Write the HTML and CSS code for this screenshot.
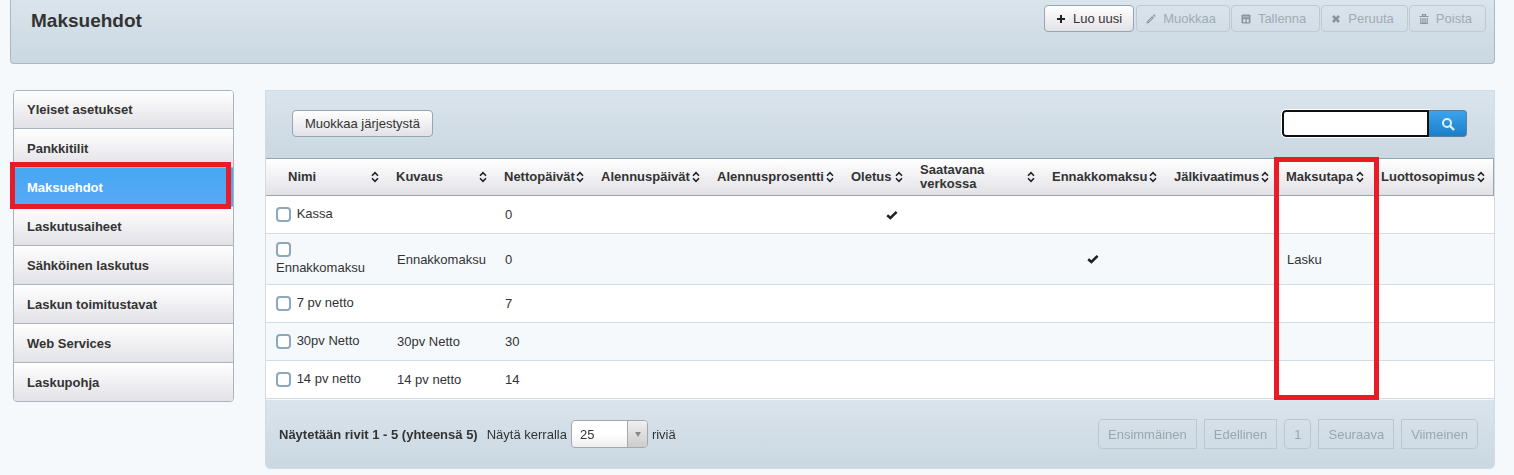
FILE: index.html
```html
<!DOCTYPE html>
<html lang="fi">
<head>
<meta charset="utf-8">
<title>Maksuehdot</title>
<link rel="stylesheet" href="styles.css">
</head>
<body>
<svg class="sprite" aria-hidden="true">
  <symbol id="sort" viewBox="0 0 8 12"><path d="M1 4.7 4 1.7 7 4.7M1 7.3l3 3 3-3" fill="none" stroke="currentColor" stroke-width="1.6"/></symbol>
  <symbol id="check" viewBox="0 0 12 10"><path d="M1.2 5.2 4.4 8 10.6 1.8" fill="none" stroke="currentColor" stroke-width="2.6"/></symbol>
</svg>
<header class="page-header">
  <h1 class="title">Maksuehdot</h1>
  <div class="actions">
    <button class="btn" type="button"><svg class="icon" viewBox="0 0 10 10"><path d="M5 1v8M1 5h8" stroke="currentColor" stroke-width="2"/></svg>Luo uusi</button>
    <button class="btn" type="button" disabled><svg class="icon" viewBox="0 0 10 10"><path d="M.5 9.5 1 7.2 6.2 2 8 3.8 2.8 9zM6.9 1.3 8 .3 9.7 2 8.7 3.1z" fill="currentColor"/><path d="M2.3 7.7 6.3 3.7" stroke="#d7e1e9" stroke-width=".7"/></svg>Muokkaa</button>
    <button class="btn" type="button" disabled><svg class="icon" viewBox="0 0 10 10"><path d="M1.5.5h7l1 1v7l-1 1h-7l-1-1v-7z" fill="currentColor"/><path d="M2 2.8h6M2.5 5.4h1.6v2.6h-1.6zM6 5.4h1.5v2.6h-1.5z" fill="#d7e1e9" stroke="#d7e1e9" stroke-width=".6"/></svg>Tallenna</button>
    <button class="btn" type="button" disabled><svg class="icon" viewBox="0 0 10 10"><path d="M2 2l6 6M8 2 2 8" stroke="currentColor" stroke-width="2.6"/></svg>Peruuta</button>
    <button class="btn" type="button" disabled><svg class="icon" viewBox="0 0 10 10"><path d="M.5 2.5h9M3.5 2V.7h3V2M1.8 4v5.4h6.4V4M4 4v5M6 4v5" fill="none" stroke="currentColor" stroke-width="1.2"/></svg>Poista</button>
  </div>
</header>
<div class="layout">
  <nav class="side">
    <a class="side-link" href="#">Yleiset asetukset</a>
    <a class="side-link" href="#">Pankkitilit</a>
    <a class="side-link active" href="#">Maksuehdot<span class="mark mark-link"></span></a>
    <a class="side-link" href="#">Laskutusaiheet</a>
    <a class="side-link" href="#">Sähköinen laskutus</a>
    <a class="side-link" href="#">Laskun toimitustavat</a>
    <a class="side-link" href="#">Web Services</a>
    <a class="side-link" href="#">Laskupohja</a>
  </nav>
  <main class="panel">
    <div class="toolbar">
      <button class="btn" type="button">Muokkaa järjestystä</button>
      <form class="search">
        <input class="search-input" type="text" aria-label="Haku" autofocus>
        <button class="search-btn" type="button" aria-label="Hae"><svg class="search-icon" viewBox="0 0 14 14"><circle cx="6" cy="6" r="4" fill="none" stroke="currentColor" stroke-width="2"/><path d="M9 9l4 4" stroke="currentColor" stroke-width="2.4"/></svg></button>
      </form>
    </div>
    <div class="table-wrap">
      <table class="terms">
        <colgroup><col class="c-name"><col class="c-desc"><col class="c-net"><col class="c-ddays"><col class="c-dperc"><col class="c-def"><col class="c-web"><col class="c-pre"><col class="c-cod"><col class="c-method"><col class="c-credit"></colgroup>
        <thead><tr>
          <th><button class="sort" type="button">Nimi<svg class="sort-icon"><use href="#sort"/></svg></button></th>
          <th><button class="sort" type="button">Kuvaus<svg class="sort-icon"><use href="#sort"/></svg></button></th>
          <th><button class="sort" type="button">Nettopäivät<svg class="sort-icon"><use href="#sort"/></svg></button></th>
          <th><button class="sort" type="button">Alennuspäivät<svg class="sort-icon"><use href="#sort"/></svg></button></th>
          <th><button class="sort" type="button">Alennusprosentti<svg class="sort-icon"><use href="#sort"/></svg></button></th>
          <th><button class="sort" type="button">Oletus<svg class="sort-icon"><use href="#sort"/></svg></button></th>
          <th><button class="sort" type="button">Saatavana verkossa<svg class="sort-icon"><use href="#sort"/></svg></button></th>
          <th><button class="sort" type="button">Ennakkomaksu<svg class="sort-icon"><use href="#sort"/></svg></button></th>
          <th><button class="sort" type="button">Jälkivaatimus<svg class="sort-icon"><use href="#sort"/></svg></button></th>
          <th><button class="sort" type="button">Maksutapa<svg class="sort-icon"><use href="#sort"/></svg></button></th>
          <th><button class="sort" type="button">Luottosopimus<svg class="sort-icon"><use href="#sort"/></svg></button></th>
        </tr></thead>
        <tbody>
          <tr><td class="name"><input class="tick" type="checkbox" id="r1"> <label for="r1">Kassa</label></td><td></td><td>0</td><td></td><td></td><td class="yes"><svg class="check"><use href="#check"/></svg></td><td></td><td></td><td></td><td></td><td></td></tr>
          <tr><td class="name"><input class="tick" type="checkbox" id="r2"> <label for="r2">Ennakkomaksu</label></td><td>Ennakkomaksu</td><td>0</td><td></td><td></td><td></td><td></td><td class="yes"><svg class="check"><use href="#check"/></svg></td><td></td><td>Lasku</td><td></td></tr>
          <tr><td class="name"><input class="tick" type="checkbox" id="r3"> <label for="r3">7 pv netto</label></td><td></td><td>7</td><td></td><td></td><td></td><td></td><td></td><td></td><td></td><td></td></tr>
          <tr><td class="name"><input class="tick" type="checkbox" id="r4"> <label for="r4">30pv Netto</label></td><td>30pv Netto</td><td>30</td><td></td><td></td><td></td><td></td><td></td><td></td><td></td><td></td></tr>
          <tr><td class="name"><input class="tick" type="checkbox" id="r5"> <label for="r5">14 pv netto</label></td><td>14 pv netto</td><td>14</td><td></td><td></td><td></td><td></td><td></td><td></td><td></td><td></td></tr>
        </tbody>
      </table>
      <span class="mark mark-column"></span>
    </div>
    <footer class="pager">
      <strong class="count">Näytetään rivit 1 - 5 (yhteensä 5)</strong>
      <label for="size">Näytä kerralla</label>
      <span class="select-box"><select class="size" id="size"><option>25</option></select></span>
      <span>riviä</span>
      <div class="pages">
        <button class="page first" type="button" disabled>Ensimmäinen</button>
        <button class="page" type="button" disabled>Edellinen</button>
        <button class="page current" type="button" disabled>1</button>
        <button class="page" type="button" disabled>Seuraava</button>
        <button class="page last" type="button" disabled>Viimeinen</button>
      </div>
    </footer>
  </main>
</div>
</body>
</html>
```

FILE: styles.css
```css
* { box-sizing: border-box; }
body {
  margin: 0;
  background: #f5f9fc;
  color: #333;
  font: 13px/17px "Liberation Sans", Arial, sans-serif;
}
button, input, select { font: inherit; color: inherit; }
.sprite { position: absolute; width: 0; height: 0; }

.page-header {
  display: flex;
  justify-content: space-between;
  align-items: flex-start;
  margin: 0 19px 0 10px;
  padding: 5px 8px 30px 20px;
  border: 1px solid #a9b9c4;
  border-top: 0;
  border-radius: 0 0 4px 4px;
  background: linear-gradient(#dae4ec, #cad8e2);
}
.title { margin: 0; padding-top: 4px; font-size: 19px; line-height: 24px; }
.actions { display: flex; gap: 1px; }
.btn {
  display: flex;
  align-items: center;
  gap: 7px;
  height: 27px;
  padding: 0 12px;
  border: 1px solid #93a7b5;
  border-radius: 4px;
  background: linear-gradient(#fff, #e2e1e6);
}
.actions .btn:first-child { margin-right: 1px; padding: 0 11px; }
.btn:disabled { padding: 0 13px 0 9px; border-color: #bccad4; background: none; color: #a0abb3; }
.icon { width: 10px; height: 10px; color: #222; }
.btn:disabled .icon { color: #8a959d; }

.layout { display: flex; align-items: flex-start; gap: 31px; margin: 26px 19px 6px 13px; }
.side {
  flex: 0 0 221px;
  border: 1px solid #a9b4bd;
  border-radius: 4px;
}
.side-link {
  position: relative;
  display: flex;
  align-items: center;
  height: 39px;
  padding: 0 13px;
  border-bottom: 1px solid #a9b4bd;
  background: linear-gradient(#fff, #e2e1e6);
  color: #333;
  font-weight: bold;
  text-decoration: none;
}
.side-link:first-child { height: 38px; border-radius: 3px 3px 0 0; }
.side-link:last-child { height: 38px; border-bottom: 0; border-radius: 0 0 3px 3px; }
.side-link.active { background: linear-gradient(#46a8f2, #5ba8f8); color: #fff; }
.mark { position: absolute; z-index: 1; border: 5px solid #e81c26; pointer-events: none; }
.mark-link { inset: -6px 2px -3px -4px; }

.panel {
  flex: 1;
  min-width: 0;
  border: 1px solid #d3dce3;
  border-radius: 0 0 5px 5px;
  overflow: hidden;
}
.toolbar {
  display: flex;
  justify-content: space-between;
  padding: 19px 27px 21px 26px;
  background: linear-gradient(#dae4ec, #cad8e2);
}
.search { display: flex; }
.search-input {
  width: 147px;
  height: 27px;
  padding: 0 2px;
  border: 2px solid #101010;
  border-radius: 4px 0 0 4px;
  outline: 1px solid #fff;
  background: #fff;
}
.search-btn {
  display: grid;
  place-items: center;
  z-index: 1;
  width: 38px;
  padding: 0;
  border: 1px solid #55819f;
  border-left: 0;
  border-radius: 0 4px 4px 0;
  background: linear-gradient(#3ba3ec, #1b7fc8);
  color: #e2f1fc;
}
.search-icon { width: 14px; height: 14px; }

.table-wrap { position: relative; }
.terms { width: 100%; table-layout: fixed; border-spacing: 0; background: #fff; }
.c-name { width: 120px; }
.c-desc { width: 108px; }
.c-net { width: 97px; }
.c-ddays { width: 116px; }
.c-dperc { width: 134px; }
.c-def { width: 69px; }
.c-web { width: 132px; }
.c-pre { width: 122px; }
.c-cod { width: 112px; }
.c-method { width: 95px; }
.c-credit { width: 123px; }
th {
  height: 38px;
  padding: 0 7px 0 10px;
  border: solid #93a7b5;
  border-width: 1px 0;
  background: linear-gradient(#fff, #e2e1e6);
}
th:first-child { padding-left: 22px; }
th:last-child { padding-right: 8px; border-right-width: 1px; }
.sort {
  display: flex;
  align-items: center;
  justify-content: space-between;
  width: 100%;
  padding: 0;
  border: 0;
  background: none;
  font-weight: bold;
  line-height: 14px;
  text-align: left;
}
.sort-icon { flex: none; width: 8px; height: 12px; color: #222; }
td { height: 38px; padding: 8px 10px 8px 11px; border-bottom: 1px solid #d3dce3; }
tr:nth-child(even) td { background: #f5f9fc; }
td.name { padding: 5px 10px 7px; line-height: 19px; }
td.yes { padding: 0 0 0 45px; line-height: 0; }
.check { width: 12px; height: 10px; color: #222; }
.tick {
  appearance: none;
  width: 15px;
  height: 15px;
  margin: 0 2px 0 0;
  border: 2px solid #8ba8bd;
  border-radius: 4px;
  background: #fff;
  vertical-align: -4px;
}
.mark-column { top: -1px; bottom: -1px; left: 82.1%; width: 105px; }

.pager {
  display: flex;
  align-items: center;
  gap: 4px;
  padding: 19px 16px 19px 13px;
  border-top: 1px solid #f5f9fc;
  background: linear-gradient(#dae4ec, #cad8e2);
}
.count { margin-right: 5px; }
.select-box { position: relative; display: flex; }
.size {
  appearance: none;
  width: 77px;
  height: 28px;
  padding: 0 8px;
  border: 1px solid #a4a8ab;
  border-radius: 4px;
  background: linear-gradient(#fff 50%, #eee);
}
.select-box::before {
  content: "";
  position: absolute;
  inset: 1px 1px 1px auto;
  width: 19px;
  border-left: 1px solid #a4a8ab;
  border-radius: 0 3px 3px 0;
  background: linear-gradient(#f0f0f0, #ccc);
  pointer-events: none;
}
.select-box::after {
  content: "";
  position: absolute;
  top: 12px;
  right: 7px;
  border: solid transparent;
  border-width: 5px 3px 0;
  border-top-color: #888;
  pointer-events: none;
}
.pages { display: flex; gap: 7px; margin-left: auto; }
.page {
  height: 30px;
  padding: 0 9px;
  border: 1px solid #b9c7d1;
  background: none;
  color: #9ba6ae;
}
.first { border-radius: 4px 0 0 4px; }
.current { border-radius: 4px; }
.last { border-radius: 0 4px 4px 0; }
```
